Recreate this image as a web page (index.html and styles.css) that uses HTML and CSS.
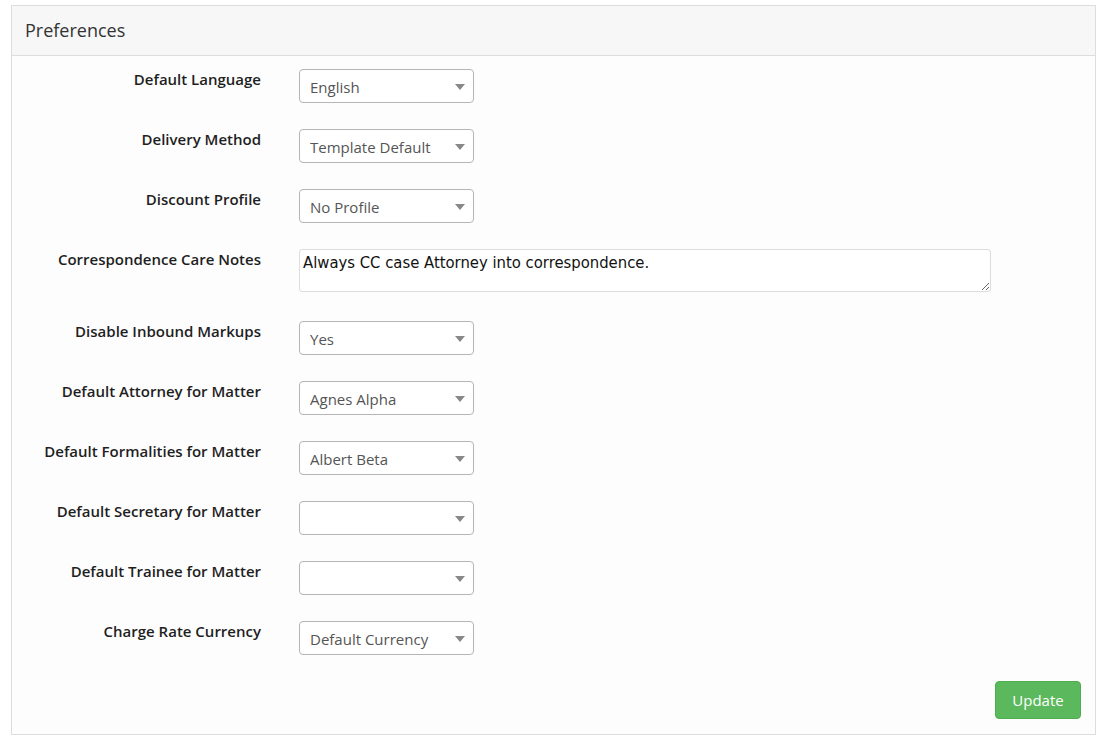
FILE: index.html
```html
<!DOCTYPE html>
<html lang="en">
<head>
    <meta charset="UTF-8">
    <meta name="viewport" content="width=device-width, initial-scale=1.0">
    <title>Preferences</title>
    <link rel="stylesheet" href="styles.css">
</head>
<body>
    <div class="panel">
        <div class="panel-heading">Preferences</div>
        <form class="panel-body" onsubmit="event.preventDefault();">
            <div class="row">
                <label class="label">Default Language</label>
                <div class="select-wrap">
                    <select><option>English</option></select>
                    <svg class="caret" width="10" height="6" viewBox="0 0 10 6"><path d="M0 0H10L5 6Z" fill="#888"/></svg>
                </div>
            </div>
            <div class="row">
                <label class="label">Delivery Method</label>
                <div class="select-wrap">
                    <select><option>Template Default</option></select>
                    <svg class="caret" width="10" height="6" viewBox="0 0 10 6"><path d="M0 0H10L5 6Z" fill="#888"/></svg>
                </div>
            </div>
            <div class="row">
                <label class="label">Discount Profile</label>
                <div class="select-wrap">
                    <select><option>No Profile</option></select>
                    <svg class="caret" width="10" height="6" viewBox="0 0 10 6"><path d="M0 0H10L5 6Z" fill="#888"/></svg>
                </div>
            </div>
            <div class="row row-notes">
                <label class="label">Correspondence Care Notes</label>
                <textarea class="notes">Always CC case Attorney into correspondence.</textarea>
            </div>
            <div class="row">
                <label class="label">Disable Inbound Markups</label>
                <div class="select-wrap">
                    <select><option>Yes</option></select>
                    <svg class="caret" width="10" height="6" viewBox="0 0 10 6"><path d="M0 0H10L5 6Z" fill="#888"/></svg>
                </div>
            </div>
            <div class="row">
                <label class="label">Default Attorney for Matter</label>
                <div class="select-wrap">
                    <select><option>Agnes Alpha</option></select>
                    <svg class="caret" width="10" height="6" viewBox="0 0 10 6"><path d="M0 0H10L5 6Z" fill="#888"/></svg>
                </div>
            </div>
            <div class="row">
                <label class="label">Default Formalities for Matter</label>
                <div class="select-wrap">
                    <select><option>Albert Beta</option></select>
                    <svg class="caret" width="10" height="6" viewBox="0 0 10 6"><path d="M0 0H10L5 6Z" fill="#888"/></svg>
                </div>
            </div>
            <div class="row">
                <label class="label">Default Secretary for Matter</label>
                <div class="select-wrap">
                    <select><option></option></select>
                    <svg class="caret" width="10" height="6" viewBox="0 0 10 6"><path d="M0 0H10L5 6Z" fill="#888"/></svg>
                </div>
            </div>
            <div class="row">
                <label class="label">Default Trainee for Matter</label>
                <div class="select-wrap">
                    <select><option></option></select>
                    <svg class="caret" width="10" height="6" viewBox="0 0 10 6"><path d="M0 0H10L5 6Z" fill="#888"/></svg>
                </div>
            </div>
            <div class="row">
                <label class="label">Charge Rate Currency</label>
                <div class="select-wrap">
                    <select><option>Default Currency</option></select>
                    <svg class="caret" width="10" height="6" viewBox="0 0 10 6"><path d="M0 0H10L5 6Z" fill="#888"/></svg>
                </div>
            </div>
            <div class="actions">
                <button type="submit" class="btn-update">Update</button>
            </div>
        </form>
    </div>
</body>
</html>
```

FILE: styles.css
```css
body {
    margin: 5px 12px 0 11px;
    background: #fff;
    font-family: "Open Sans", Arial, sans-serif;
    font-size: 15px;
    color: #222;
}
.panel {
    width: 1085px;
    height: 730px;
    box-sizing: border-box;
    border: 1px solid #ddd;
    background: #fdfdfd;
}
.panel-heading {
    height: 50px;
    box-sizing: border-box;
    padding: 12px 13px;
    background: #f7f7f7;
    border-bottom: 1px solid #ddd;
    font-size: 18px;
    line-height: 24px;
    color: #333;
}
.panel-body {
    display: flex;
    flex-direction: column;
    gap: 26px;
    padding: 13px 14px 0 0;
}
.row {
    display: flex;
    align-items: flex-start;
    gap: 38px;
}
.row-notes {
    margin-bottom: 3px;
}
.label {
    width: 249px;
    flex: none;
    text-align: right;
    font-weight: 600;
    line-height: 21px;
    color: #1f1f1f;
}
.select-wrap {
    position: relative;
    width: 175px;
    height: 34px;
}
.select-wrap select {
    appearance: none;
    -webkit-appearance: none;
    width: 100%;
    height: 100%;
    box-sizing: border-box;
    border: 1px solid #b5b5b5;
    border-radius: 4px;
    background: #fff;
    padding: 2px 10px 0;
    font-family: "Open Sans", Arial, sans-serif;
    font-size: 15px;
    color: #555;
    outline: none;
}
.caret {
    position: absolute;
    right: 9px;
    top: 15px;
    pointer-events: none;
}
.notes {
    display: block;
    width: 692px;
    height: 43px;
    box-sizing: border-box;
    border: 1px solid #ddd;
    border-radius: 3px;
    padding: 2px 3px;
    font-family: "DejaVu Sans Condensed", "DejaVu Sans", sans-serif;
    font-size: 16.5px;
    line-height: 21px;
    color: #111;
    background: #fff;
}
.actions {
    display: flex;
    justify-content: flex-end;
}
.btn-update {
    width: 86px;
    height: 38px;
    border: 1px solid #4cae4c;
    border-radius: 4px;
    background: #5cb85c;
    color: #fff;
    font-family: "Open Sans", Arial, sans-serif;
    font-size: 15px;
    cursor: pointer;
}
```
